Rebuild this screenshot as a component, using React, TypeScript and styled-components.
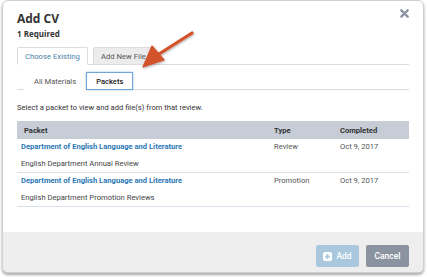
import React from "react";
import styled, { createGlobalStyle } from "styled-components";

const GlobalStyle = createGlobalStyle`
  html, body {
    margin: 0;
    padding: 0;
    background: #ffffff;
  }
  body {
    font-family: Roboto, "Liberation Sans", sans-serif;
    color: #333;
  }
`;

const packets = [
  {
    name: "Department of English Language and Literature",
    review: "English Department Annual Review",
    type: "Review",
    completed: "Oct 9, 2017",
  },
  {
    name: "Department of English Language and Literature",
    review: "English Department Promotion Reviews",
    type: "Promotion",
    completed: "Oct 9, 2017",
  },
];

export default function App() {
  return (
    <>
      <GlobalStyle />
      <Page>
        <Modal>
          <Header>
            <Title>Add CV</Title>
            <Required>1 Required</Required>
            <CloseButton aria-label="Close">
              <svg width="9" height="9" viewBox="0 0 10 10">
                <path d="M1.5 1.5 L8.5 8.5 M8.5 1.5 L1.5 8.5" stroke="#8b93a1" strokeWidth="2.6" strokeLinecap="round" />
              </svg>
            </CloseButton>
          </Header>

          <Body>
            <Tabs>
              <Tab active>Choose Existing</Tab>
              <Tab>Add New File</Tab>
            </Tabs>

            <SubTabs>
              <SubTab>All Materials</SubTab>
              <SubTab active>Packets</SubTab>
            </SubTabs>

            <Hint>Select a packet to view and add file(s) from that review.</Hint>

            <Table>
              <thead>
                <tr>
                  <Th>Packet</Th>
                  <Th>Type</Th>
                  <Th>Completed</Th>
                </tr>
              </thead>
              <tbody>
                {packets.map((p, i) => (
                  <Row key={i}>
                    <Td>
                      <PacketLink>{p.name}</PacketLink>
                      <ReviewName>{p.review}</ReviewName>
                    </Td>
                    <Td>{p.type}</Td>
                    <Td>{p.completed}</Td>
                  </Row>
                ))}
              </tbody>
            </Table>
          </Body>

          <Footer>
            <AddButton disabled>
              <svg width="9" height="9" viewBox="0 0 10 10">
                <rect x="0" y="0" width="10" height="10" rx="2" fill="#fff" />
                <path d="M5 2.3 V7.7 M2.3 5 H7.7" stroke="#a9c8dd" strokeWidth="1.8" />
              </svg>
              Add
            </AddButton>
            <CancelButton>Cancel</CancelButton>
          </Footer>

          <Arrow width="70" height="50" viewBox="0 0 70 50">
            <defs>
              <filter id="sh" x="-20%" y="-20%" width="140%" height="140%">
                <feDropShadow dx="0.5" dy="1" stdDeviation="0.8" floodColor="#000" floodOpacity="0.35" />
              </filter>
            </defs>
            <g filter="url(#sh)">
              <path d="M53 4 L20 25" stroke="#d2532b" strokeWidth="3.2" strokeLinecap="round" />
              <path d="M4 38 L13 17 L25 31 Z" fill="#d2532b" strokeLinejoin="round" stroke="#d2532b" strokeWidth="1.2" />
            </g>
          </Arrow>
        </Modal>
      </Page>
    </>
  );
}

const Page = styled.div`
  padding: 0 3px 4px 2px;
  width: 427px;
  height: 277px;
  box-sizing: border-box;
`;

const Modal = styled.div`
  position: relative;
  height: 273px;
  box-sizing: border-box;
  border: 1px solid #cfcfcf;
  border-radius: 6px;
  background: #fff;
  box-shadow: 0 2px 3px rgba(0, 0, 0, 0.35);
  display: flex;
  flex-direction: column;
  overflow: hidden;
`;

const Header = styled.div`
  position: relative;
  padding: 10px 14px 0;
`;

const Title = styled.div`
  font-family: "Open Sans", "Liberation Sans", sans-serif;
  font-weight: 700;
  font-size: 12px;
  line-height: 16px;
  color: #333;
`;

const Required = styled.div`
  font-family: "Open Sans", "Liberation Sans", sans-serif;
  font-weight: 700;
  font-size: 8px;
  line-height: 10px;
  margin-top: 2px;
  color: #333;
`;

const CloseButton = styled.button`
  position: absolute;
  top: 8px;
  right: 14px;
  border: 0;
  padding: 0;
  background: none;
  line-height: 0;
`;

const Body = styled.div`
  flex: 1;
  padding: 0 14px;
`;

const Tabs = styled.div`
  display: flex;
  gap: 5px;
  margin-top: 8px;
  border-bottom: 1px solid #dcdcdc;
  height: 17px;
`;

const Tab = styled.div<{ active?: boolean }>`
  height: 18px;
  box-sizing: border-box;
  padding: 0 7px;
  display: flex;
  align-items: center;
  font-size: 7.7px;
  border: 1px solid #dcdcdc;
  border-bottom: 1px solid ${({ active }) => (active ? "#fff" : "#dcdcdc")};
  background: ${({ active }) => (active ? "#fff" : "#ececec")};
  color: ${({ active }) => (active ? "#4b7fa9" : "#555")};
  border-radius: 2px 2px 0 0;
  margin-bottom: -1px;
`;

const SubTabs = styled.div`
  display: flex;
  align-items: flex-end;
  border-bottom: 1px solid #dcdcdc;
  height: 24px;
  padding-left: 7px;
`;

const SubTab = styled.div<{ active?: boolean }>`
  height: 18px;
  box-sizing: border-box;
  padding: 0 9px;
  display: flex;
  align-items: center;
  font-size: 7.6px;
  font-weight: ${({ active }) => (active ? 500 : 400)};
  color: ${({ active }) => (active ? "#222" : "#555")};
  border: 1px solid ${({ active }) => (active ? "#6ea7d8" : "transparent")};
  box-shadow: ${({ active }) => (active ? "0 0 2px rgba(80, 150, 220, 0.6)" : "none")};
  background: #fff;
  margin-bottom: -1px;
`;

const Hint = styled.div`
  font-size: 7.6px;
  color: #333;
  margin-top: 13px;
  line-height: 10px;
`;

const Table = styled.table`
  width: 100%;
  border-collapse: collapse;
  margin-top: 8px;
  font-size: 7.6px;
`;

const Th = styled.th`
  background: #c7cdd6;
  height: 18px;
  padding: 0 7px;
  text-align: left;
  font-weight: 700;
  color: #333;
  &:nth-child(2) {
    width: 52px;
  }
  &:nth-child(3) {
    width: 62px;
  }
`;

const Row = styled.tr`
  border-bottom: 1px solid #dbe1ea;
`;

const Td = styled.td`
  padding: 3px 7px 3px;
  vertical-align: top;
  color: #555;
  line-height: 10px;
  &:first-child {
    padding-left: 4px;
  }
`;

const PacketLink = styled.div`
  color: #2b78b5;
  font-weight: 700;
`;

const ReviewName = styled.div`
  margin-top: 7px;
  color: #444;
`;

const Footer = styled.div`
  background: #eeeeee;
  height: 40px;
  display: flex;
  justify-content: flex-end;
  align-items: flex-start;
  gap: 7px;
  padding: 13px 14px 0;
  box-sizing: border-box;
`;

const BaseButton = styled.button`
  height: 22px;
  border: 0;
  border-radius: 2px;
  color: #fff;
  font-family: Roboto, "Liberation Sans", sans-serif;
  font-size: 8.5px;
  font-weight: 500;
  display: flex;
  align-items: center;
  justify-content: center;
  gap: 4px;
`;

const AddButton = styled(BaseButton)`
  width: 43px;
  background: #a9c8dd;
`;

const CancelButton = styled(BaseButton)`
  width: 43px;
  background: #8b93a1;
`;

const Arrow = styled.svg`
  position: absolute;
  left: 136px;
  top: 28px;
  overflow: visible;
`;
